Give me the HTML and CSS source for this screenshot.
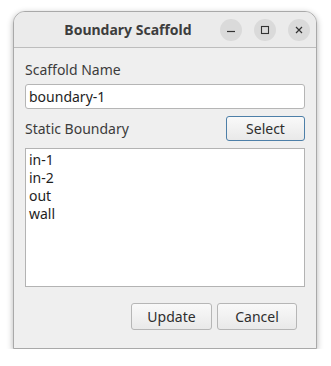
FILE: index.html
```html
<!DOCTYPE html>
<html lang="en">
<head>
    <meta charset="UTF-8">
    <title>Boundary Scaffold</title>
    <link rel="stylesheet" href="styles.css">
</head>
<body>
    <div class="window">
        <div class="titlebar">
            <div class="title">Boundary Scaffold</div>
            <div class="wm-buttons">
                <span class="wm-btn">
                    <svg width="10" height="10" viewBox="0 0 10 10"><path d="M1 6.5H9" stroke="#333" stroke-width="1.2"/></svg>
                </span>
                <span class="wm-btn">
                    <svg width="10" height="10" viewBox="0 0 10 10"><rect x="1.5" y="1.5" width="7" height="7" fill="none" stroke="#333" stroke-width="1.1"/></svg>
                </span>
                <span class="wm-btn">
                    <svg width="10" height="10" viewBox="0 0 10 10"><path d="M2 2L8 8M8 2L2 8" stroke="#333" stroke-width="1.2"/></svg>
                </span>
            </div>
        </div>

        <div class="content">
            <div class="label">Scaffold Name</div>
            <input type="text" class="text-field" value="boundary-1">

            <div class="row">
                <div class="label">Static Boundary</div>
                <button class="btn btn-default">Select</button>
            </div>

            <ul class="list">
                <li>in-1</li>
                <li>in-2</li>
                <li>out</li>
                <li>wall</li>
            </ul>

            <div class="actions">
                <button class="btn">Update</button>
                <button class="btn">Cancel</button>
            </div>
        </div>
    </div>
</body>
</html>
```

FILE: styles.css
```css
body {
    margin: 0;
    padding: 11px 0 0 13px;
    background: #ffffff;
    font-family: "Noto Sans", "DejaVu Sans", sans-serif;
    font-size: 14px;
    color: #333;
}
.window {
    width: 302px;
    height: 336px;
    border: 1px solid #a9a9a9;
    border-radius: 12px 12px 0 0;
    background: #efefef;
    box-shadow: 0 2px 6px rgba(0, 0, 0, 0.3);
    display: flex;
    flex-direction: column;
}
.titlebar {
    height: 35px;
    border-bottom: 1px solid #bdbdbd;
    background: #ebebeb;
    border-radius: 11px 11px 0 0;
    display: flex;
    align-items: center;
    padding: 0 6px 0 22px;
}
.title {
    flex: 1;
    text-align: center;
    font-weight: bold;
    font-size: 14px;
    color: #3d3d3d;
}
.wm-buttons {
    display: flex;
    gap: 12px;
}
.wm-btn {
    width: 22px;
    height: 22px;
    border-radius: 50%;
    background: #dadada;
    display: flex;
    align-items: center;
    justify-content: center;
}
.content {
    flex: 1;
    padding: 12px 11px 0 11px;
    display: flex;
    flex-direction: column;
}
.label {
    line-height: 20px;
    color: #3c3c3c;
}
.text-field {
    margin-top: 4px;
    height: 25px;
    box-sizing: border-box;
    border: 1px solid #b5b5b5;
    border-radius: 3px;
    background: #fff;
    font-family: inherit;
    font-size: 14px;
    color: #1e1e1e;
    padding: 0 3px;
    outline: none;
}
.row {
    margin-top: 7px;
    display: flex;
    align-items: center;
    justify-content: space-between;
}
.btn {
    height: 27px;
    box-sizing: border-box;
    border: 1px solid #b6b6b6;
    border-radius: 3px;
    background: linear-gradient(#f9f9f9, #e9e9e9);
    font-family: inherit;
    font-size: 14px;
    color: #2e2e2e;
    padding: 0;
    width: 81px;
}
.btn-default {
    height: 25px;
    width: 79px;
    border-color: #4d7fa8;
}
.list {
    margin: 7px 0 0 0;
    padding: 2px 3px;
    list-style: none;
    height: 139px;
    box-sizing: border-box;
    border: 1px solid #b3b3b3;
    background: #fff;
    color: #1e1e1e;
}
.list li {
    line-height: 18px;
}
.actions {
    margin-top: 16px;
    padding-right: 8px;
    display: flex;
    justify-content: flex-end;
    gap: 5px;
}
.actions .btn:last-child {
    width: 80px;
}
```
